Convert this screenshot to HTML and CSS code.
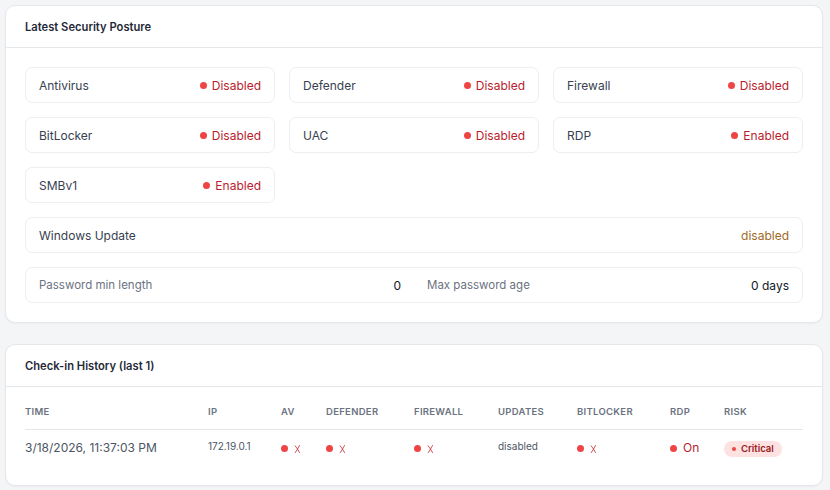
FILE: index.html
```html
<!DOCTYPE html>
<html lang="en">
<head>
    <meta charset="UTF-8">
    <meta name="viewport" content="width=device-width, initial-scale=1.0">
    <title>Device Security</title>
    <link rel="stylesheet" href="styles.css">
</head>
<body>
    <div class="card">
        <div class="card-header">Latest Security Posture</div>
        <div class="card-body">
            <div class="posture-grid">
                <div class="item">
                    <span class="label">Antivirus</span>
                    <span class="status bad"><span class="dot"></span>Disabled</span>
                </div>
                <div class="item">
                    <span class="label">Defender</span>
                    <span class="status bad"><span class="dot"></span>Disabled</span>
                </div>
                <div class="item">
                    <span class="label">Firewall</span>
                    <span class="status bad"><span class="dot"></span>Disabled</span>
                </div>
                <div class="item">
                    <span class="label">BitLocker</span>
                    <span class="status bad"><span class="dot"></span>Disabled</span>
                </div>
                <div class="item">
                    <span class="label">UAC</span>
                    <span class="status bad"><span class="dot"></span>Disabled</span>
                </div>
                <div class="item">
                    <span class="label">RDP</span>
                    <span class="status bad"><span class="dot"></span>Enabled</span>
                </div>
                <div class="item">
                    <span class="label">SMBv1</span>
                    <span class="status bad"><span class="dot"></span>Enabled</span>
                </div>
            </div>

            <div class="item wide">
                <span class="label">Windows Update</span>
                <span class="status warn">disabled</span>
            </div>

            <div class="item wide split">
                <div class="pair">
                    <span class="muted">Password min length</span>
                    <span class="value">0</span>
                </div>
                <div class="pair">
                    <span class="muted">Max password age</span>
                    <span class="value">0 days</span>
                </div>
            </div>
        </div>
    </div>

    <div class="card">
        <div class="card-header">Check-in History (last 1)</div>
        <div class="card-body table-body">
            <table class="history">
                <thead>
                    <tr>
                        <th class="c-time">Time</th>
                        <th class="c-ip">IP</th>
                        <th class="c-av">AV</th>
                        <th class="c-def">Defender</th>
                        <th class="c-fw">Firewall</th>
                        <th class="c-upd">Updates</th>
                        <th class="c-bl">BitLocker</th>
                        <th class="c-rdp">RDP</th>
                        <th class="c-risk">Risk</th>
                    </tr>
                </thead>
                <tbody>
                    <tr>
                        <td><span class="time">3/18/2026, 11:37:03 PM</span></td>
                        <td class="small">172.19.0.1</td>
                        <td><span class="flag"><span class="dot"></span><svg class="cross" viewBox="0 0 8 11"><path d="M1 1.5 Q4 5 6.5 10 M6.5 1 Q4 6 1.2 10"/></svg></span></td>
                        <td><span class="flag"><span class="dot"></span><svg class="cross" viewBox="0 0 8 11"><path d="M1 1.5 Q4 5 6.5 10 M6.5 1 Q4 6 1.2 10"/></svg></span></td>
                        <td><span class="flag"><span class="dot"></span><svg class="cross" viewBox="0 0 8 11"><path d="M1 1.5 Q4 5 6.5 10 M6.5 1 Q4 6 1.2 10"/></svg></span></td>
                        <td class="small">disabled</td>
                        <td><span class="flag"><span class="dot"></span><svg class="cross" viewBox="0 0 8 11"><path d="M1 1.5 Q4 5 6.5 10 M6.5 1 Q4 6 1.2 10"/></svg></span></td>
                        <td><span class="flag on"><span class="dot"></span>On</span></td>
                        <td><span class="badge"><span class="dot"></span>Critical</span></td>
                    </tr>
                </tbody>
            </table>
        </div>
    </div>
</body>
</html>
```

FILE: styles.css
```css
* {
    margin: 0;
    padding: 0;
    box-sizing: border-box;
}

body {
    font-family: Inter, 'Noto Sans', sans-serif;
    background: #f4f5f7;
    color: #374151;
    padding: 5px 7px 0 5px;
}

.card {
    background: white;
    border: 1px solid #e5e7eb;
    border-radius: 10px;
    box-shadow: 0 1px 2px rgba(0,0,0,0.04);
    margin-bottom: 21px;
}

.card-header {
    height: 42px;
    padding: 0 19px;
    display: flex;
    align-items: center;
    border-bottom: 1px solid #e5e7eb;
    font-size: 11.2px;
    font-weight: 600;
    color: #1f2937;
}

.card-body {
    padding: 19px 19px 19px;
    display: flex;
    flex-direction: column;
    gap: 14px;
}

.posture-grid {
    display: grid;
    grid-template-columns: repeat(3, 1fr);
    gap: 14px;
}

.item {
    height: 36px;
    border: 1px solid #eceef1;
    border-radius: 7px;
    padding: 0 13px;
    display: flex;
    align-items: center;
    justify-content: space-between;
    font-size: 12px;
}

.label {
    color: #374151;
}

.status {
    display: flex;
    align-items: center;
    gap: 5px;
}

.status.bad {
    color: #b91c2c;
}

.status.warn {
    color: #a16a1f;
}

.dot {
    width: 7px;
    height: 7px;
    border-radius: 50%;
    background: #ef4444;
    display: inline-block;
}

.split {
    display: grid;
    grid-template-columns: 1fr 1fr;
    gap: 26px;
}

.pair {
    display: flex;
    justify-content: space-between;
}

.muted {
    color: #6b7280;
    font-size: 11.5px;
}

.value {
    color: #111827;
}

.table-body {
    padding-bottom: 17px;
}

.history {
    width: 100%;
    border-collapse: collapse;
    table-layout: fixed;
}

.history th {
    text-align: left;
    font-size: 9.5px;
    font-weight: 600;
    text-transform: uppercase;
    letter-spacing: 0.3px;
    color: #6b7280;
    padding: 0 0 12px;
    border-bottom: 1px solid #e5e7eb;
}

.history td {
    font-size: 12px;
    line-height: 16px;
    color: #374151;
    padding: 8px 0 10px;
    vertical-align: middle;
}

.history td.small {
    font-size: 10px;
    color: #4b5563;
    padding-bottom: 14px;
}

.time {
    color: #4b5563;
}

.c-time { width: 183px; }
.c-ip { width: 73px; }
.c-av { width: 45px; }
.c-def { width: 88px; }
.c-fw { width: 84px; }
.c-upd { width: 79px; }
.c-bl { width: 93px; }
.c-rdp { width: 54px; }
.c-risk { width: 79px; }

.flag {
    display: inline-flex;
    align-items: center;
    gap: 6px;
    color: #c0262d;
}

.cross {
    width: 7px;
    height: 10px;
    fill: none;
    stroke: #c0262d;
    stroke-width: 0.9;
}

.flag .dot {
    width: 7px;
    height: 7px;
}

.flag.on {
    font-size: 12px;
    color: #b91c2c;
}

.badge {
    display: inline-flex;
    align-items: center;
    gap: 5px;
    background: #fee2e2;
    color: #991b1b;
    font-size: 9.5px;
    line-height: 12px;
    font-weight: 600;
    padding: 2px 8px;
    border-radius: 9px;
}

.badge .dot {
    width: 4px;
    height: 4px;
}
```
